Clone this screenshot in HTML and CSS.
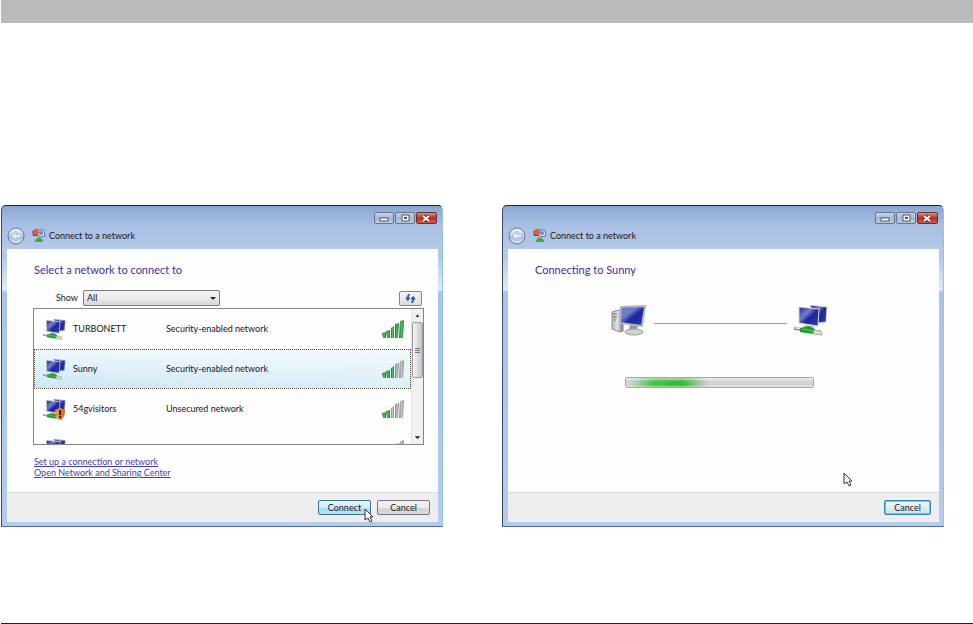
FILE: index.html
```html
<!DOCTYPE html>
<html lang="en">
<head>
    <meta charset="UTF-8">
    <meta name="viewport" content="width=device-width, initial-scale=1.0">
    <title>Connect to a network</title>
    <link rel="stylesheet" href="styles.css">
</head>
<body>
    <!-- Shared icons -->
    <svg class="icon-defs" aria-hidden="true">
        <defs>
            <linearGradient id="screen" x1="0" y1="0" x2="1" y2="1">
                <stop offset="0" stop-color="#20248c"/>
                <stop offset="0.35" stop-color="#6f80cf"/>
                <stop offset="0.55" stop-color="#1f2699"/>
                <stop offset="1" stop-color="#2a3cc4"/>
            </linearGradient>
            <linearGradient id="metal" x1="0" y1="0" x2="1" y2="0">
                <stop offset="0" stop-color="#b4b6bb"/>
                <stop offset="0.5" stop-color="#e4e4e4"/>
                <stop offset="1" stop-color="#75777c"/>
            </linearGradient>
            <linearGradient id="orb" x1="0" y1="0" x2="0" y2="1">
                <stop offset="0" stop-color="#edf3fa"/>
                <stop offset="0.48" stop-color="#c8d6e9"/>
                <stop offset="0.52" stop-color="#a5bad6"/>
                <stop offset="1" stop-color="#dce9f8"/>
            </linearGradient>
            <linearGradient id="green-bar" x1="0" y1="0" x2="1" y2="0">
                <stop offset="0" stop-color="#16702f"/>
                <stop offset="0.5" stop-color="#55bd68"/>
                <stop offset="1" stop-color="#1c7a35"/>
            </linearGradient>
            <linearGradient id="gray-bar" x1="0" y1="0" x2="1" y2="0">
                <stop offset="0" stop-color="#858585"/>
                <stop offset="0.5" stop-color="#c4c4c4"/>
                <stop offset="1" stop-color="#8a8a8a"/>
            </linearGradient>
        </defs>
        <symbol id="icon-network" viewBox="0 0 34 31">
            <path d="M16 0L33 2L32 17L23 18Z" fill="url(#screen)" stroke="#d5d3c8"/>
            <path d="M5 2L25 4L24 21L5 18Z" fill="url(#screen)" stroke="#d9d5c4"/>
            <path d="M10 20L21 21L19 24L9 23Z" fill="#c5c5c8"/>
            <path d="M0 22L8 23L8 26L0 25Z" fill="#8f9692"/>
            <path d="M1 23L8 24" stroke="#eef2ee"/>
            <path d="M6 23L15 21L21 24L20 29L12 28L6 27Z" fill="#1f9a32"/>
            <path d="M8 24L19 26" stroke="#66c865"/>
            <path d="M20 25L27 26L28 30L19 29Z" fill="#cfe2cd" stroke="#9fb3a1"/>
        </symbol>
        <symbol id="icon-pc" viewBox="0 0 36 31">
            <path d="M1 7L8 5L12 6L12 26L9 27L1 24Z" fill="url(#metal)" stroke="#8b8c90"/>
            <path d="M2 9L6 9M2 12L6 12" stroke="#66686c"/>
            <circle cx="4" cy="15" r="1" fill="#40b64b"/>
            <path d="M19 19L27 20L26 26L18 25Z" fill="#95979c"/>
            <ellipse cx="23" cy="27" rx="9" ry="3" fill="#d0d1d4" stroke="#9a9b9e"/>
            <path d="M10 2L34 1L31 21L9 18Z" fill="url(#screen)" stroke="#b6b7bb" stroke-width="2"/>
            <path d="M11 3L21 3L10 12Z" fill="#8492d6" opacity=".6"/>
        </symbol>
        <symbol id="icon-app" viewBox="0 0 14 14">
            <path d="M5 1L12 1L13 7L6 8Z" fill="#dce8f8" stroke="#5474b3"/>
            <path d="M0 2L5 2L6 7L1 7Z" fill="#3758aa"/>
            <circle cx="4" cy="3" r="3" fill="#e25d34"/>
            <circle cx="9" cy="4" r="2" fill="#5c8be0"/>
            <circle cx="7" cy="8" r="2" fill="#cf9b55"/>
            <path d="M3 13Q3 9 7 9Q11 9 11 13Z" fill="#3fa845"/>
        </symbol>
        <symbol id="icon-back" viewBox="0 0 18 18">
            <circle cx="9" cy="9" r="8" fill="url(#orb)" stroke="#68788f"/>
            <path d="M9 4L4 9L9 14V11H14V7H9Z" fill="#dfeaf7" stroke="#a4b7cf"/>
        </symbol>
        <symbol id="icon-cursor" viewBox="0 0 10 15">
            <path d="M1 1V12L4 10L6 14L8 13L6 9L9 9Z" fill="#fff" stroke="#3a2c33"/>
        </symbol>
        <symbol id="icon-shield" viewBox="0 0 10 12">
            <path d="M5 0L10 2Q10 10 5 12Q0 10 0 2Z" fill="#f09428"/>
            <path d="M5 0L10 2Q10 10 5 12Z" fill="#d9771f"/>
            <path d="M5 2V7M5 8V10" stroke="#3a1c10" stroke-width="2"/>
        </symbol>
        <symbol id="bar-1" viewBox="0 0 22 18"><path d="M0 13L4 12V18H1Z"/></symbol>
        <symbol id="bar-2" viewBox="0 0 22 18"><path d="M4 11L8 10V18H5Z"/></symbol>
        <symbol id="bar-3" viewBox="0 0 22 18"><path d="M9 8L12 6V18H9Z"/></symbol>
        <symbol id="bar-4" viewBox="0 0 22 18"><path d="M13 4L17 3L16 18H13Z"/></symbol>
        <symbol id="bar-5" viewBox="0 0 22 18"><path d="M18 1L22 0L21 18H17Z"/></symbol>
    </svg>

    <header class="page-bar"></header>

    <main class="screens">
        <section class="window">
            <div class="titlebar">
                <div class="nav">
                    <button type="button" class="back" aria-label="Back"><svg><use href="#icon-back"/></svg></button>
                    <svg class="app-icon"><use href="#icon-app"/></svg>
                    <span class="title">Connect to a network</span>
                </div>
                <div class="controls">
                    <button type="button" aria-label="Minimize"><svg viewBox="0 0 18 10"><rect x="5" y="5" width="8" height="3" fill="#fff" stroke="#4c5668"/></svg></button>
                    <button type="button" aria-label="Maximize"><svg viewBox="0 0 18 10"><rect x="6" y="2" width="7" height="6" fill="#fff" stroke="#4c5668"/><rect x="8" y="4" width="3" height="2" fill="#4c5668"/></svg></button>
                    <button type="button" class="close" aria-label="Close"><svg viewBox="0 0 18 10"><path d="M6 3L12 8M12 3L6 8" stroke="#6b2a2a" stroke-width="4"/><path d="M6 3L12 8M12 3L6 8" stroke="#fff" stroke-width="2"/></svg></button>
                </div>
            </div>
            <div class="client">
                <div class="content">
                    <h1>Select a network to connect to</h1>
                    <div class="toolbar">
                        <label for="show">Show</label>
                        <div class="select-wrap">
                            <select id="show">
                                <option>All</option>
                            </select>
                        </div>
                        <button type="button" class="refresh" aria-label="Refresh">
                            <svg viewBox="0 0 12 10"><path d="M5 0Q3 1 3 5M7 10Q9 9 9 5" fill="none" stroke="#2c56b8" stroke-width="2"/><path d="M0 4H6L3 8ZM6 6H12L9 2Z" fill="#2c56b8"/></svg>
                        </button>
                    </div>
                    <div class="network-box">
                        <ul class="networks">
                            <li>
                                <span class="net-icon"><svg><use href="#icon-network"/></svg></span>
                                <span class="name">TURBONETT</span>
                                <span>Security-enabled network</span>
                                <svg class="signal level-5"><use href="#bar-1"/><use href="#bar-2"/><use href="#bar-3"/><use href="#bar-4"/><use href="#bar-5"/></svg>
                            </li>
                            <li class="selected">
                                <span class="net-icon"><svg><use href="#icon-network"/></svg></span>
                                <span class="name">Sunny</span>
                                <span>Security-enabled network</span>
                                <svg class="signal level-3"><use href="#bar-1"/><use href="#bar-2"/><use href="#bar-3"/><use href="#bar-4"/><use href="#bar-5"/></svg>
                            </li>
                            <li>
                                <span class="net-icon"><svg><use href="#icon-network"/></svg><svg class="shield"><use href="#icon-shield"/></svg></span>
                                <span class="name">54gvisitors</span>
                                <span>Unsecured network</span>
                                <svg class="signal level-2"><use href="#bar-1"/><use href="#bar-2"/><use href="#bar-3"/><use href="#bar-4"/><use href="#bar-5"/></svg>
                            </li>
                            <li>
                                <span class="net-icon"><svg><use href="#icon-network"/></svg></span>
                                <span class="name"></span>
                                <span></span>
                                <svg class="signal level-2"><use href="#bar-1"/><use href="#bar-2"/><use href="#bar-3"/><use href="#bar-4"/><use href="#bar-5"/></svg>
                            </li>
                        </ul>
                        <div class="scrollbar">
                            <svg viewBox="0 0 12 13"><path d="M4 8H8L6 5Z" fill="#333"/></svg>
                            <div class="thumb"></div>
                            <svg class="down" viewBox="0 0 12 13"><path d="M3 5H9L6 8Z" fill="#222"/></svg>
                        </div>
                    </div>
                    <div class="links">
                        <a href="#">Set up a connection or network</a>
                        <a href="#">Open Network and Sharing Center</a>
                    </div>
                </div>
                <div class="footer">
                    <button type="button" class="btn hot">Connect</button>
                    <button type="button" class="btn">Cancel</button>
                </div>
            </div>
            <svg class="cursor on-connect"><use href="#icon-cursor"/></svg>
        </section>

        <section class="window">
            <div class="titlebar">
                <div class="nav">
                    <button type="button" class="back" aria-label="Back"><svg><use href="#icon-back"/></svg></button>
                    <svg class="app-icon"><use href="#icon-app"/></svg>
                    <span class="title">Connect to a network</span>
                </div>
                <div class="controls">
                    <button type="button" aria-label="Minimize"><svg viewBox="0 0 18 10"><rect x="5" y="5" width="8" height="3" fill="#fff" stroke="#4c5668"/></svg></button>
                    <button type="button" aria-label="Maximize"><svg viewBox="0 0 18 10"><rect x="6" y="2" width="7" height="6" fill="#fff" stroke="#4c5668"/><rect x="8" y="4" width="3" height="2" fill="#4c5668"/></svg></button>
                    <button type="button" class="close" aria-label="Close"><svg viewBox="0 0 18 10"><path d="M6 3L12 8M12 3L6 8" stroke="#6b2a2a" stroke-width="4"/><path d="M6 3L12 8M12 3L6 8" stroke="#fff" stroke-width="2"/></svg></button>
                </div>
            </div>
            <div class="client">
                <div class="content">
                    <h1>Connecting to Sunny</h1>
                    <div class="connecting">
                        <div class="route">
                            <svg class="pc"><use href="#icon-pc"/></svg>
                            <div class="wire"></div>
                            <svg class="net"><use href="#icon-network"/></svg>
                        </div>
                        <progress aria-label="Connecting"></progress>
                    </div>
                </div>
                <div class="footer">
                    <button type="button" class="btn small focused">Cancel</button>
                </div>
            </div>
            <svg class="cursor idle"><use href="#icon-cursor"/></svg>
        </section>
    </main>

    <footer class="page-rule"></footer>
</body>
</html>
```
FILE: styles.css
```css
* {
    box-sizing: border-box;
}
body {
    margin: 0;
    padding-left: 1px;
    min-height: 100vh;
    display: flex;
    flex-direction: column;
    background: #fff;
    color: #1c1418;
    font-family: Lato, "Liberation Sans", sans-serif;
    font-size: 9px;
    line-height: 12px;
}
button, select {
    font: inherit;
    color: inherit;
    margin: 0;
    padding: 0;
}
svg {
    display: block;
}
.icon-defs {
    position: absolute;
    width: 0;
    height: 0;
}
.page-bar {
    height: 23px;
    background: #bababa;
}
.page-rule {
    margin-top: auto;
    border-top: 1px solid #231f20;
}

/* Windows */
.screens {
    display: grid;
    grid-template-columns: 1fr 1fr;
    gap: 59px;
    padding: 182px 29px 32px 0;
}
.window {
    position: relative;
    display: flex;
    flex-direction: column;
    padding: 0 4px 4px 5px;
    border: 1px solid #3d4a5c;
    border-top-color: #222;
    border-right-color: #8fc4e4;
    border-bottom-color: #4f6f94;
    border-radius: 5px 5px 0 0;
    background: linear-gradient(#8ca7d1, #a9c0e5 20px, #b4c8e9 43px, #b4c8e9 50px, #dceafa 84px, #a9c4ea 86px, #b2cbee);
}
.titlebar {
    display: flex;
    justify-content: space-between;
    align-items: flex-start;
    height: 43px;
}
.nav {
    display: flex;
    align-items: center;
    padding-top: 21px;
}
.back {
    width: 18px;
    height: 18px;
    border: 0;
    background: none;
}
.back svg {
    width: 18px;
    height: 18px;
}
.app-icon {
    width: 14px;
    height: 14px;
    margin: 0 3px 0 7px;
}
.controls {
    display: flex;
    gap: 1px;
    padding: 6px 1px 0 0;
}
.controls button {
    width: 20px;
    height: 12px;
    border: 1px solid #66748c;
    border-radius: 2px;
    background: linear-gradient(#c9d6ea, #a5b7d4 50%, #bccbe2);
}
.controls svg {
    width: 18px;
    height: 10px;
}
.controls .close {
    width: 21px;
    border-color: #6b2b30;
    background: linear-gradient(#dc9085, #b92f21 50%, #d85a40);
}
.client {
    flex: 1;
    display: flex;
    flex-direction: column;
    background: #fdfdfd;
}
.content {
    flex: 1;
    padding: 13px 14px 14px 27px;
}
h1 {
    margin: 0;
    font-size: 11px;
    font-weight: 400;
    line-height: 15px;
    color: #3c2f9e;
}

/* Network picker */
.toolbar {
    display: flex;
    align-items: center;
    margin: 13px 2px 2px 22px;
}
.select-wrap {
    position: relative;
    width: 137px;
    margin-left: 5px;
}
.select-wrap::after {
    content: "";
    position: absolute;
    right: 4px;
    top: 7px;
    border: 3px solid transparent;
    border-top-color: #222;
    border-bottom: 0;
    pointer-events: none;
}
select {
    display: block;
    width: 100%;
    height: 16px;
    padding-left: 3px;
    appearance: none;
    border: 1px solid #827a80;
    border-radius: 2px;
    background: linear-gradient(#f2f2f2, #ececec 50%, #d6d6d6);
}
.refresh {
    display: flex;
    align-items: center;
    justify-content: center;
    width: 23px;
    height: 15px;
    margin-left: auto;
    border: 1px solid #8d8087;
    border-radius: 2px;
    background: linear-gradient(#f6f6f6, #dcdcdc);
}
.refresh svg {
    width: 11px;
    height: 9px;
}
.network-box {
    display: flex;
    height: 137px;
    margin-left: -1px;
    border: 1px solid #8f8088;
    overflow: hidden;
}
.networks {
    flex: 1;
    margin: 0;
    padding: 0;
    list-style: none;
}
.networks li {
    display: grid;
    grid-template-columns: 30px 93px 1fr 22px;
    align-items: center;
    height: 40px;
    padding: 0 6px 0 8px;
    border: 1px solid transparent;
}
.networks .selected {
    border: 1px dotted #5c5040;
    background: linear-gradient(90deg, transparent, rgba(255, 255, 255, 0.3)), linear-gradient(#eff8fc, #cde8f4);
}
.net-icon {
    position: relative;
}
.net-icon svg {
    width: 23px;
    height: 21px;
}
.net-icon .shield {
    position: absolute;
    left: 12px;
    top: 9px;
    width: 10px;
    height: 12px;
}
.signal {
    width: 22px;
    height: 18px;
    fill: url(#gray-bar);
}
.level-5 use,
.level-3 use:nth-child(-n+3),
.level-2 use:nth-child(-n+2) {
    fill: url(#green-bar);
}
.scrollbar {
    display: flex;
    flex-direction: column;
    width: 12px;
    border-left: 1px solid #e2e2e2;
    background: #f1f1f1;
}
.scrollbar svg {
    width: 11px;
    height: 13px;
}
.scrollbar .down {
    margin-top: auto;
}
.thumb {
    height: 56px;
    border: 1px solid #9a9a9e;
    border-radius: 2px;
    background:
        repeating-linear-gradient(#77777b 0 1px, transparent 1px 2px) center / 5px 5px no-repeat,
        linear-gradient(90deg, #f6f6f6, #dedee0 50%, #c4c4c8);
}
.links {
    display: flex;
    flex-direction: column;
    align-items: flex-start;
    margin-top: 11px;
    line-height: 11px;
}
.links a {
    color: #3f3fb0;
}

/* Buttons */
.footer {
    display: flex;
    justify-content: flex-end;
    gap: 6px;
    height: 30px;
    padding: 7px 8px 0 0;
    border-top: 1px solid #dedada;
    background: #efeeef;
}
.btn {
    width: 53px;
    height: 15px;
    border: 1px solid #7d757b;
    border-radius: 2px;
    background: linear-gradient(#f3f3f3, #ebebeb 50%, #d2d2d2 51%, #dcdcdc);
    line-height: 12px;
}
.hot {
    border-color: #3c6f90;
    background: linear-gradient(#e6f5fd, #d2edfa 50%, #a9dbf3 51%, #b9e4f6);
}
.small {
    width: 47px;
}
.focused {
    border-color: #2f86b0;
    box-shadow: inset 0 0 0 1px #62cdf0;
    background: linear-gradient(#f0f8fb, #dcecf3 50%, #c9e2ec);
}

/* Connection progress */
.connecting {
    display: flex;
    flex-direction: column;
    align-items: center;
    padding: 28px 21px 0 0;
}
.route {
    display: flex;
    align-items: center;
    gap: 7px;
}
.pc {
    width: 36px;
    height: 31px;
}
.net {
    width: 34px;
    height: 31px;
}
.wire {
    width: 133px;
    height: 1px;
    margin-top: 5px;
    background: #a5969a;
}
progress {
    width: 189px;
    height: 11px;
    margin-top: 41px;
    appearance: none;
    border: 1px solid #a5a5a5;
    border-radius: 2px;
}
progress::-webkit-progress-bar {
    background:
        linear-gradient(rgba(255, 255, 255, 0.6), transparent 40%, transparent 80%, rgba(255, 255, 255, 0.5)),
        linear-gradient(90deg, transparent 2%, #4cc44e 14%, #35b837 30%, transparent 44%),
        #d3d3d3;
}

/* Mouse pointers */
.cursor {
    position: absolute;
    width: 10px;
    height: 15px;
}
.on-connect {
    right: 68px;
    bottom: 3px;
}
.idle {
    right: 90px;
    bottom: 39px;
}
```
